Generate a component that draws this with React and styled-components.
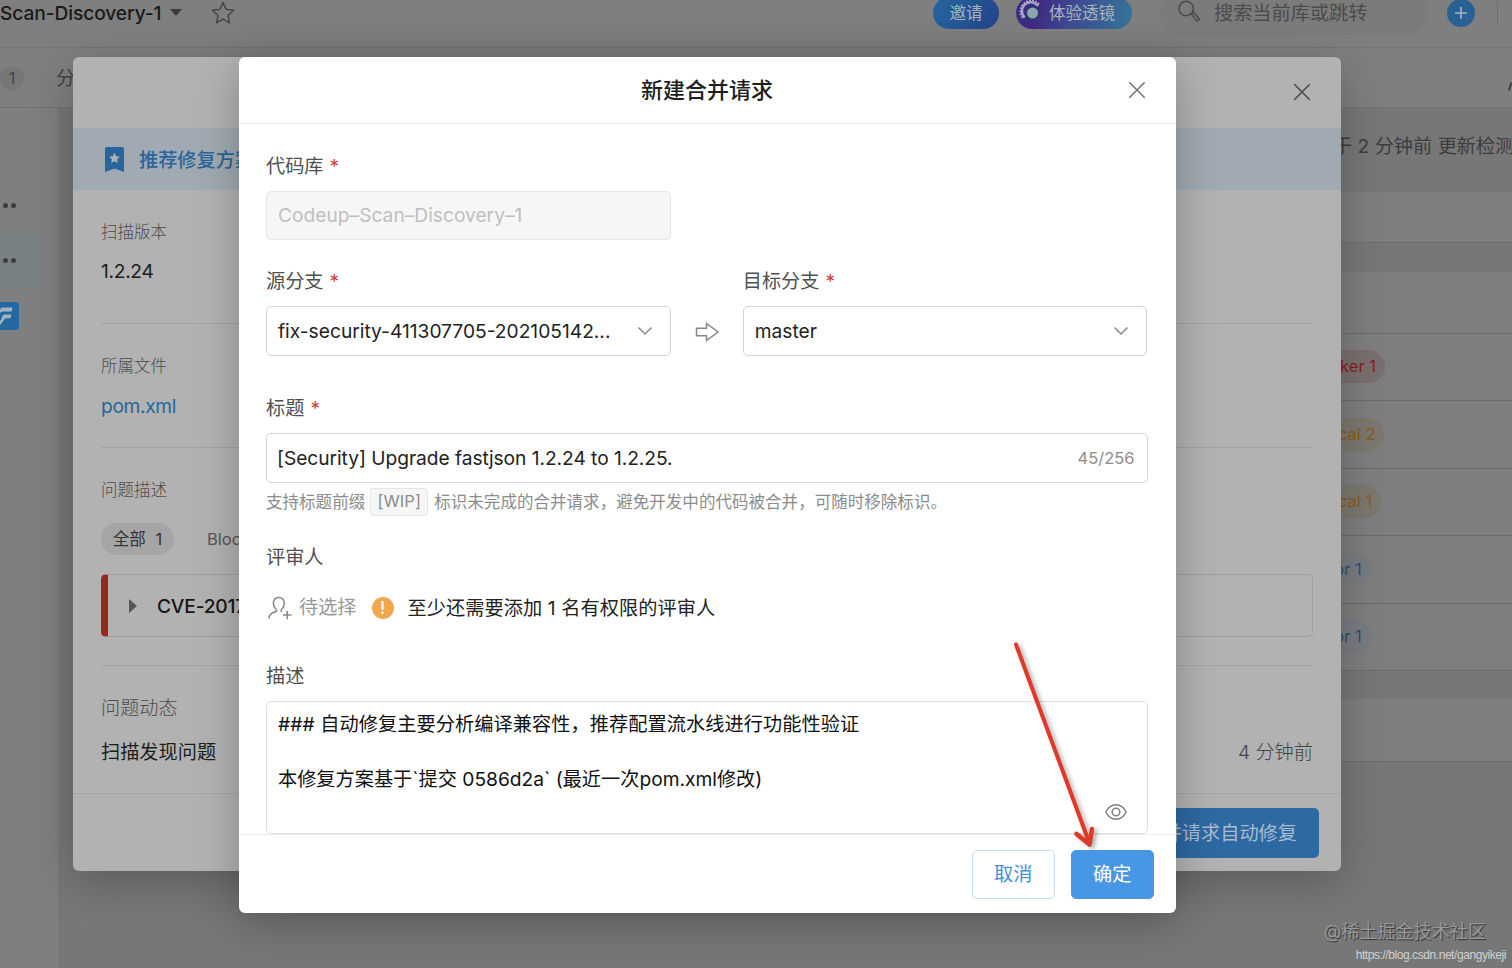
import React from 'react';
import styled, { createGlobalStyle } from 'styled-components';

const GlobalStyle = createGlobalStyle`
  * {
    box-sizing: border-box;
  }
  body {
    margin: 0;
    overflow: hidden;
    font-family: Inter, 'Noto Sans CJK SC', sans-serif;
    font-size: 19.2px;
    line-height: 26px;
    color: #222;
    white-space: nowrap;
  }
  svg {
    display: block;
    flex: none;
  }
`;

/* ---------- page behind the dialogs ---------- */

const Page = styled.div`
  position: relative;
  width: 1512px;
  height: 968px;
  overflow: hidden;
  background: #7f7f7f;
`;

const Header = styled.header`
  display: flex;
  align-items: center;
  height: 70px;
  margin-top: -22px;
  border-bottom: 1px solid #757575;
`;

const RepoName = styled.div`
  width: 163px;
  font-weight: 500;
  letter-spacing: -0.1px;
  color: #191919;
`;

const Caret = styled.i`
  margin: 0 29px 0 7px;
  border: 6.5px solid transparent;
  border-top: 7px solid #3c3c3c;
  border-bottom: 0;
`;

const HeaderRight = styled.div`
  display: flex;
  align-items: center;
  margin-left: auto;
`;

const Pill = styled.div`
  display: flex;
  align-items: center;
  height: 32px;
  width: ${({ $width }) => $width}px;
  padding-left: ${({ $left }) => $left}px;
  margin-right: ${({ $gap }) => $gap}px;
  border-radius: 16px;
  gap: 4px;
  font-size: 16.5px;
  color: #a9b3bd;
  background: ${({ $bg }) => $bg};
`;

const Search = styled.div`
  display: flex;
  align-items: center;
  width: 267px;
  height: 45px;
  padding-left: 17px;
  margin-right: 20px;
  gap: 13px;
  border-radius: 22px;
  background: #7b7b7b;
  color: #4b4b4b;
`;

const AddButton = styled.div`
  display: flex;
  align-items: center;
  justify-content: center;
  width: 28px;
  height: 28px;
  margin-right: 22px;
  border-radius: 50%;
  background: #2a6195;
`;

const Divider = styled.i`
  width: 15px;
  height: 22px;
  border-left: 1px solid #6d6d6d;
`;

const TabBar = styled.nav`
  display: flex;
  align-items: center;
  height: 60px;
  border-bottom: 1px solid #727272;
  color: #444;
`;

const Count = styled.span`
  width: 24px;
  height: 24px;
  margin-right: 32px;
  border-radius: 50%;
  background: #777;
  font-size: 16px;
  line-height: 24px;
  text-align: center;
`;

const TabEnd = styled.div`
  margin-left: auto;
  padding-top: 17px;
`;

const Columns = styled.div`
  display: flex;
  height: 860px;
`;

const Sidebar = styled.aside`
  width: 58px;
  padding-top: 70px;
`;

const SideItem = styled.div`
  display: flex;
  align-items: center;
  gap: 3px;
  width: 43px;
  height: 55px;
  padding-left: 3px;
  background: ${({ $active }) => ($active ? '#7a8185' : 'none')};
`;

const Dot = styled.i`
  width: 5px;
  height: 5px;
  border-radius: 50%;
  background: #3d3d3d;
`;

const AppLogo = styled.div`
  display: flex;
  align-items: center;
  width: 19px;
  height: 28px;
  margin-top: 14px;
  border-radius: 0 4px 4px 0;
  background: #25689f;
`;

const Content = styled.main`
  flex: 1;
  padding-left: 28px;
  overflow: hidden;
  background: #777;
`;

const ContentInfo = styled.div`
  height: 84px;
  padding: 25px 0 0 1247px;
  color: #3d3d3d;
`;

const Panel = styled.div`
  margin-bottom: ${({ $gap }) => $gap}px;
  background: #7e7e7e;
`;

const PanelRow = styled.div`
  display: flex;
  align-items: center;
  height: ${({ $height }) => $height}px;
  padding-left: 1211px;
  border-bottom: 1px solid #6c6c6c;
`;

const levels = {
  blocker: { color: '#861f1f', background: '#796f6e' },
  critical: { color: '#8a5a1c', background: '#7c786f' },
  major: { color: '#285179', background: '#787c80' },
};

const Level = styled.span`
  height: 33px;
  padding: 0 9px;
  border-radius: 17px;
  font-size: 16.5px;
  line-height: 32px;
  color: ${({ $level }) => levels[$level].color};
  background: ${({ $level }) => levels[$level].background};
`;

/* ---------- issue dialog ---------- */

const Layer = styled.div`
  position: absolute;
  inset: 0;
  padding: 56.5px 0 0 ${({ $left }) => $left}px;
`;

const IssueDialog = styled.section`
  display: flex;
  flex-direction: column;
  width: 1268px;
  height: 814.5px;
  border-radius: 6px;
  background: #b2b2b2;
  box-shadow: 0 10px 44px rgba(0, 0, 0, 0.24);
`;

const IssueHeader = styled.div`
  display: flex;
  align-items: center;
  justify-content: flex-end;
  height: 71.5px;
  padding-right: 30px;
`;

const Banner = styled.div`
  display: flex;
  align-items: center;
  gap: 15px;
  height: 62px;
  padding: 1px 0 0 32px;
  color: #28659d;
  font-weight: 500;
  background: #a1aab2;
`;

const IssueBody = styled.div`
  padding: 0 28px;
`;

const Section = styled.div`
  height: ${({ $height }) => $height}px;
  padding-top: 29.5px;
  border-bottom: ${({ $last }) => ($last ? '0' : '1px solid #a3a3a3')};
`;

const SectionTitle = styled.div`
  height: 24px;
  font-size: ${({ $large }) => ($large ? 19.2 : 16.5)}px;
  font-weight: 300;
  line-height: 25px;
  color: #4c4c4c;
`;

const SectionValue = styled.div`
  display: flex;
  justify-content: space-between;
  margin-top: ${({ $top = 14 }) => $top}px;
  color: ${({ $link }) => ($link ? '#29659d' : '#1c1c1c')};
  letter-spacing: ${({ $spacing = 0 }) => $spacing}px;
`;

const Time = styled.span`
  font-weight: 300;
  color: #444;
`;

const Filters = styled.div`
  display: flex;
  align-items: center;
  gap: 33px;
  height: 32px;
  margin-top: 21.5px;
  font-size: 16.5px;
  color: #555;
`;

const FilterActive = styled.span`
  width: 73px;
  height: 32px;
  border-radius: 16px;
  line-height: 32px;
  text-align: center;
  word-spacing: 5px;
  color: #333;
  background: #a5a5a5;
`;

const Vulnerability = styled.div`
  display: flex;
  align-items: center;
  height: 63px;
  margin-top: 19px;
  padding-left: 21px;
  border: 1px solid #a0a0a0;
  border-left: 7px solid #96291f;
  border-radius: 5px;
  color: #161616;
  font-weight: 500;
  letter-spacing: -0.2px;
`;

const Expand = styled.i`
  margin-right: 20px;
  border: 7px solid transparent;
  border-left: 8px solid #555;
  border-right: 0;
`;

const IssueFooter = styled.div`
  display: flex;
  justify-content: flex-end;
  margin-top: auto;
  height: 78px;
  padding: 14px 22px 0 0;
  border-top: 1px solid #a5a5a5;
`;

const FixButton = styled.div`
  height: 50px;
  padding: 0 22px;
  border-radius: 5px;
  line-height: 50px;
  color: #a9bccd;
  background: #2d69a3;
`;

/* ---------- merge request dialog ---------- */

const MergeDialog = styled.section`
  display: flex;
  flex-direction: column;
  width: 937px;
  height: 856px;
  border-radius: 6px;
  background: #fff;
  box-shadow: 0 10px 44px rgba(0, 0, 0, 0.26);
`;

const MergeHeader = styled.div`
  display: grid;
  grid-template-columns: 48px 1fr 48px;
  align-items: center;
  height: 67px;
  border-bottom: 1px solid #ebebeb;
`;

const Title = styled.h2`
  grid-column: 2;
  margin: 0;
  font-size: 22px;
  font-weight: 500;
  text-align: center;
  color: #1f1f1f;
`;

const Form = styled.div`
  height: 710.5px;
  padding: 29px 28px 0 27.5px;
`;

const Field = styled.div`
  width: ${({ $width }) => $width || '100%'};
  margin-bottom: ${({ $gap = 0 }) => $gap}px;
`;

const Label = styled.div`
  height: 26px;
  margin-bottom: 12px;
  color: #505050;
`;

const Required = styled.span`
  margin-left: 6px;
  color: #d0433c;
`;

const Control = styled.div`
  display: flex;
  align-items: center;
  justify-content: space-between;
  height: 49.5px;
  padding: 0 ${({ $right = 17 }) => $right}px 0 ${({ $left = 11 }) => $left}px;
  border: 1px solid ${({ $disabled }) => ($disabled ? '#e6e6e6' : '#d4d4d4')};
  border-radius: 5px;
  color: ${({ $disabled }) => ($disabled ? '#bfbfbf' : '#222')};
  background: ${({ $disabled }) => ($disabled ? '#f6f6f6' : '#fff')};
  letter-spacing: ${({ $spacing = 0 }) => $spacing}px;
`;

const Counter = styled.span`
  font-size: 16.5px;
  letter-spacing: 0;
  color: #8c8c8c;
`;

const Branches = styled.div`
  display: flex;
  align-items: flex-end;
  margin-bottom: 39.5px;
`;

const ArrowBox = styled.div`
  display: flex;
  align-items: center;
  justify-content: center;
  width: 72px;
  height: 48px;
`;

const Help = styled.div`
  display: flex;
  align-items: center;
  height: 28px;
  margin: 5.5px 0 27.5px;
  font-size: 16.5px;
  color: #8c8c8c;
  letter-spacing: 0.04px;
`;

const Tag = styled.code`
  width: 58px;
  height: 28px;
  margin: 0 6px 0 5px;
  border: 1px solid #e6e6e6;
  border-radius: 3px;
  font: inherit;
  line-height: 24px;
  text-align: center;
  background: #f6f6f6;
`;

const Reviewers = styled.div`
  display: flex;
  align-items: center;
  height: 28px;
  margin: 24px 0 41px;
  color: #222;
`;

const PickReviewer = styled.span`
  margin: 0 15px 0 7px;
  padding-bottom: 2px;
  color: #999;
`;

const ReviewerHint = styled.span`
  letter-spacing: 0.07px;
`;

const Warning = styled.span`
  width: 22px;
  height: 22px;
  margin-right: 14px;
  border-radius: 50%;
  font-size: 17px;
  font-weight: 500;
  line-height: 22px;
  text-align: center;
  color: #fff;
  background: #f0a84f;
`;

const Description = styled.div`
  display: flex;
  flex-direction: column;
  height: 133px;
  padding: 9px 20px 13px 11px;
  border: 1px solid #e0e0e0;
  border-radius: 5px;
  line-height: 27.5px;
  color: #111;
`;

const Line = styled.div`
  height: 27.5px;
  letter-spacing: ${({ $spacing = 0 }) => $spacing}px;
`;

const Preview = styled.div`
  align-self: flex-end;
  margin-top: auto;
`;

const MergeFooter = styled.div`
  display: flex;
  justify-content: flex-end;
  gap: 16.5px;
  height: 78.5px;
  padding: 14.5px 22px 0 0;
  border-top: 1px solid #ececec;
`;

const Button = styled.button`
  width: 82.5px;
  height: 49.5px;
  padding: 0;
  border: 1px solid ${({ $primary }) => ($primary ? '#4897e6' : '#c3ddf3')};
  border-radius: 5px;
  font: inherit;
  color: ${({ $primary }) => ($primary ? '#fff' : '#4491d8')};
  background: ${({ $primary }) => ($primary ? '#4897e6' : '#fff')};
`;

/* ---------- overlays ---------- */

const Pointer = styled.svg`
  position: absolute;
  left: 1000px;
  top: 630px;
  filter: drop-shadow(3px 2px 2px rgba(0, 0, 0, 0.3));
`;

const Watermark = styled.div`
  position: absolute;
  right: 26px;
  bottom: 24px;
  font-size: 18.1px;
  color: #999;
  text-shadow: 1px 1px 1px #333;
`;

const Source = styled.div`
  position: absolute;
  right: 6px;
  bottom: 4px;
  font: 12px/18px 'Liberation Sans', sans-serif;
  letter-spacing: -0.43px;
  color: #d0d0d0;
`;

function Close({ color }) {
  return (
    <svg width="18" height="18" viewBox="0 0 18 18" stroke={color} strokeWidth="1.6">
      <path d="M1.3 1.3 16.7 16.7M16.7 1.3 1.3 16.7" />
    </svg>
  );
}

function ChevronDown() {
  return (
    <svg width="16" height="10" viewBox="0 0 16 10" fill="none" stroke="#888" strokeWidth="1.5">
      <path d="M1.5 1.5 8 8l6.5-6.5" />
    </svg>
  );
}

function Lens() {
  return (
    <svg width="26" height="26" viewBox="0 0 26 26" fill="none">
      <path d="M20 4.300A10.500 10.500 0 1 0 4.500 18.500" stroke="#a9a6c2" strokeWidth="2.500" strokeDasharray="1.800 1.200" />
      <path d="M19 6A8.800 8.800 0 1 0 5.800 17.500" stroke="#a9a6c2" strokeWidth="2.400" />
      <circle cx="13.5" cy="13" r="6.600" fill="#8ba4af" stroke="#28376f" strokeWidth="2.200" />
      <path d="m8.600 18-4.600 4.600" stroke="#28376f" strokeWidth="3" />
    </svg>
  );
}

function RequiredLabel({ children }) {
  return (
    <Label>
      {children}
      <Required>*</Required>
    </Label>
  );
}

const issues = [
  ['blocker', 'Blocker 1'],
  ['critical', 'Critical 2'],
  ['critical', 'Critical 1'],
  ['major', 'Major 1'],
  ['major', 'Major 1'],
];

function Background() {
  return (
    <>
      <Header>
        <RepoName>Scan-Discovery-1</RepoName>
        <Caret />
        <svg width="24" height="24" viewBox="0 0 24 24" fill="none" stroke="#444" strokeWidth="1.4" strokeLinejoin="round">
          <path d="m12 1.5 3.1 6.9 7.5.9-5.5 5.1 1.4 7.4L12 18.1l-6.5 3.7 1.4-7.4L1.4 9.3l7.5-.9z" />
        </svg>
        <HeaderRight>
          <Pill $width={66} $left={16.5} $gap={17} $bg="linear-gradient(110deg, #2565a0, #244489)">
            邀请
          </Pill>
          <Pill $width={116} $left={3} $gap={28} $bg="linear-gradient(110deg, #402a84 20%, #3e4c91 50%, #34779b)">
            <Lens />
            <span>体验透镜</span>
          </Pill>
          <Search>
            <svg width="24" height="26" viewBox="0 0 24 26" fill="none" stroke="#484848" strokeWidth="1.4">
              <circle cx="9.2" cy="8.5" r="7.2" />
              <path d="m14.2 13.8 2.2-1.6 6.2 7-2.5 2z" />
            </svg>
            搜索当前库或跳转
          </Search>
          <AddButton>
            <svg width="12" height="12" viewBox="0 0 12 12" stroke="#a3b5c6" strokeWidth="1.6">
              <path d="M6 0v12M0 6h12" />
            </svg>
          </AddButton>
          <Divider />
        </HeaderRight>
      </Header>
      <TabBar>
        <Count>1</Count>
        分支
        <TabEnd>
          <svg width="4" height="9" viewBox="0 0 4 9" stroke="#333" strokeWidth="1.5">
            <path d="M.8 8.5 3.5.5" />
          </svg>
        </TabEnd>
      </TabBar>
      <Columns>
        <Sidebar>
          <SideItem>
            <Dot />
            <Dot />
          </SideItem>
          <SideItem $active>
            <Dot />
            <Dot />
          </SideItem>
          <AppLogo>
            <svg width="14" height="20" viewBox="0 0 14 20" fill="#a2b4c3">
              <path d="M3 1.5h9.500l-1 4H3Q0 5.500 0 8V3.500Q1 1.500 3 1.500zM4.500 8.500h7l-1.200 3.700H6.500Q4 12.500 2.500 16L0 19v-4Q2 13.500 2 11q.4-2.300 2.500-2.500z" />
            </svg>
          </AppLogo>
        </Sidebar>
        <Content>
          <ContentInfo>于 2 分钟前 更新检测</ContentInfo>
          <Panel $gap={29}>
            <PanelRow $height={51} />
          </Panel>
          <Panel $gap={28}>
            <PanelRow $height={61.5} />
            {issues.map(([level, text], index) => (
              <PanelRow $height={67.5} key={index}>
                <Level $level={level}>{text}</Level>
              </PanelRow>
            ))}
          </Panel>
          <Panel $gap={0}>
            <PanelRow $height={62.5} />
          </Panel>
        </Content>
      </Columns>
    </>
  );
}

function Issue() {
  return (
    <IssueDialog>
      <IssueHeader>
        <Close color="#4a4a4a" />
      </IssueHeader>
      <Banner>
        <svg width="19" height="25" viewBox="0 0 19 25">
          <path fill="#28659d" d="M0 2Q0 0 2 0h15q2 0 2 2v23l-9.5-3.6L0 25z" />
          <path fill="#a9b3bc" d="m9.5 5.8 1.6 3.4 3.8.5-2.8 2.6.7 3.7-3.3-1.8L6.200 16l.7-3.700-2.800-2.600 3.800-.5z" />
        </svg>
        推荐修复方案
      </Banner>
      <IssueBody>
        <Section $height={134}>
          <SectionTitle>扫描版本</SectionTitle>
          <SectionValue $spacing={-0.3}>1.2.24</SectionValue>
        </Section>
        <Section $height={124}>
          <SectionTitle>所属文件</SectionTitle>
          <SectionValue $top={15} $spacing={-0.35} $link>
            pom.xml
          </SectionValue>
        </Section>
        <Section $height={218}>
          <SectionTitle>问题描述</SectionTitle>
          <Filters>
            <FilterActive>全部 1</FilterActive>
            Blocker
          </Filters>
          <Vulnerability>
            <Expand />
            CVE-2017
          </Vulnerability>
        </Section>
        <Section $height={127} $last>
          <SectionTitle $large>问题动态</SectionTitle>
          <SectionValue $top={19.5}>
            扫描发现问题
            <Time>4 分钟前</Time>
          </SectionValue>
        </Section>
      </IssueBody>
      <IssueFooter>
        <FixButton>新建合并请求自动修复</FixButton>
      </IssueFooter>
    </IssueDialog>
  );
}

function MergeRequest() {
  return (
    <MergeDialog>
      <MergeHeader>
        <Title>新建合并请求</Title>
        <Close color="#777" />
      </MergeHeader>
      <Form>
        <Field $width="405px" $gap={28}>
          <RequiredLabel>代码库</RequiredLabel>
          <Control $disabled>Codeup–Scan–Discovery–1</Control>
        </Field>
        <Branches>
          <Field $width="405px">
            <RequiredLabel>源分支</RequiredLabel>
            <Control>
              fix-security-411307705-202105142...
              <ChevronDown />
            </Control>
          </Field>
          <ArrowBox>
            <svg width="24" height="20" viewBox="0 0 24 20" fill="none" stroke="#888" strokeWidth="1.5">
              <path d="M1.500 6.200h10V1.500L23 10 11.500 18.500v-4.700h-10z" />
            </svg>
          </ArrowBox>
          <Field $width="405px">
            <RequiredLabel>目标分支</RequiredLabel>
            <Control>
              master
              <ChevronDown />
            </Control>
          </Field>
        </Branches>
        <Field>
          <RequiredLabel>标题</RequiredLabel>
          <Control $left={10} $right={12} $spacing={-0.05}>
            [Security] Upgrade fastjson 1.2.24 to 1.2.25.
            <Counter>45/256</Counter>
          </Control>
        </Field>
        <Help>
          支持标题前缀
          <Tag>[WIP]</Tag>
          标识未完成的合并请求，避免开发中的代码被合并，可随时移除标识。
        </Help>
        <Label>评审人</Label>
        <Reviewers>
          <svg width="26" height="26" viewBox="0 0 26 26" fill="none" stroke="#888" strokeWidth="1.5">
            <path d="M3 23.500q.3-5.500 7.200-7 1-.8-.3-2.300-2.600-2.700-2.600-6.200Q7.800 2.500 12.800 2.500T18.300 8q0 3.500-2.600 6.200-1.300 1.700.3 2.500M17 20h8.500M21.200 15.800v8.500" />
          </svg>
          <PickReviewer>待选择</PickReviewer>
          <Warning>!</Warning>
          <ReviewerHint>至少还需要添加 1 名有权限的评审人</ReviewerHint>
        </Reviewers>
        <Label>描述</Label>
        <Description>
          <Line $spacing={0.07}>### 自动修复主要分析编译兼容性，推荐配置流水线进行功能性验证</Line>
          <Line />
          <Line>本修复方案基于`提交 0586d2a` (最近一次pom.xml修改)</Line>
          <Preview>
            <svg width="22" height="16" viewBox="0 0 22 16" fill="none" stroke="#808080" strokeWidth="1.5">
              <path d="M.8 8Q4.500.8 11 .8T21.200 8Q17.500 15.200 11 15.200T.8 8z" />
              <circle cx="11" cy="8" r="3.800" />
            </svg>
          </Preview>
        </Description>
      </Form>
      <MergeFooter>
        <Button>取消</Button>
        <Button $primary>确定</Button>
      </MergeFooter>
    </MergeDialog>
  );
}

export default function App() {
  return (
    <Page>
      <GlobalStyle />
      <Background />
      <Layer $left={73}>
        <Issue />
      </Layer>
      <Layer $left={238.5}>
        <MergeRequest />
      </Layer>
      <Pointer width="110" height="230" viewBox="0 0 110 230" fill="none" stroke="#e23829" strokeLinecap="round">
        <path d="M16 14.500 89 212" strokeWidth="4" />
        <path d="m76.500 204 13 10.500 2.500-15.500" strokeWidth="4.500" strokeLinejoin="round" />
      </Pointer>
      <Watermark>@稀土掘金技术社区</Watermark>
      <Source>https://blog.csdn.net/gangyikeji</Source>
    </Page>
  );
}
